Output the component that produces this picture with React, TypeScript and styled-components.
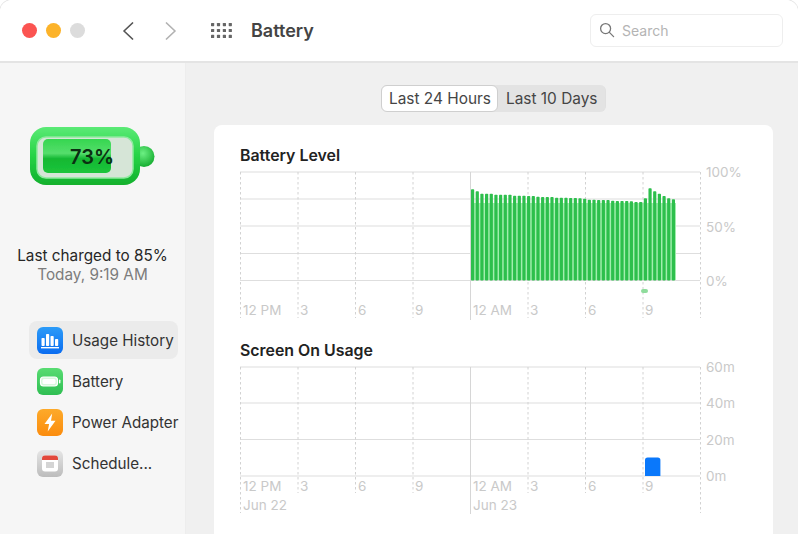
import React from "react";
import styled, { createGlobalStyle } from "styled-components";

const GlobalStyle = createGlobalStyle`
  html, body {
    margin: 0;
    padding: 0;
    width: 798px;
    height: 534px;
    overflow: hidden;
    background: #fff;
    font-family: Inter, "Liberation Sans", sans-serif;
  }
`;

const Window = styled.div`
  width: 798px;
  height: 534px;
  display: flex;
  flex-direction: column;
  overflow: hidden;
  border-radius: 12px 12px 0 0;
  box-shadow: 0 0 0 1px #e6e6e6;
`;

const TitleBar = styled.header`
  height: 61px;
  flex-shrink: 0;
  display: flex;
  align-items: center;
  padding: 0 15px 0 22px;
  background: #fff;
  border-bottom: 2px solid #e4e4e4;
`;

const TrafficLights = styled.div`
  display: flex;
  gap: 9px;
  margin-right: 37px;
`;

const Light = styled.span<{ $color: string }>`
  width: 15px;
  height: 15px;
  border-radius: 50%;
  background: ${(p) => p.$color};
`;

const NavIcons = styled.div`
  display: flex;
  align-items: center;
  gap: 31px;
  margin-right: 18px;
`;

const AppGrid = styled.svg`
  margin-left: 3px;
`;

const WindowTitle = styled.h1`
  margin: 0;
  font-size: 18px;
  font-weight: 600;
  color: #444;
  flex: 1;
`;

const SearchBox = styled.div`
  width: 193px;
  height: 33px;
  box-sizing: border-box;
  display: flex;
  align-items: center;
  gap: 7px;
  padding-left: 8px;
  margin-bottom: 1px;
  border: 1px solid #eeeeee;
  border-radius: 6px;
  font-size: 14px;
  color: #b4b4b4;
`;

const Content = styled.div`
  flex: 1;
  display: flex;
  min-height: 0;
`;

const Sidebar = styled.aside`
  width: 186px;
  flex-shrink: 0;
  display: flex;
  flex-direction: column;
  padding-top: 64px;
  box-sizing: border-box;
  background: #f6f6f6;
  border-right: 1px solid #ededed;
`;

const BatteryWrap = styled.div`
  display: flex;
  justify-content: center;
  margin-bottom: 59px;
`;

const ChargeNote = styled.p`
  margin: 0;
  text-align: center;
  font-size: 15.3px;
  line-height: 19px;
  white-space: nowrap;
  color: #262626;
`;

const ChargeTime = styled(ChargeNote)`
  color: #7c7c7c;
`;

const NavList = styled.nav`
  display: flex;
  flex-direction: column;
  gap: 3px;
  margin: 37px 7px 0 29px;
`;

const NavItem = styled.div<{ $active?: boolean }>`
  height: 38px;
  display: flex;
  align-items: center;
  gap: 9px;
  padding-left: 8px;
  border-radius: 8px;
  font-size: 15.2px;
  white-space: nowrap;
  color: #333;
  background: ${(p) => (p.$active ? "#ebebeb" : "transparent")};
`;

const Main = styled.main`
  flex: 1;
  display: flex;
  flex-direction: column;
  align-items: flex-start;
  padding: 22px 25px 0 28px;
  background: #f0f0f0;
  min-width: 0;
`;

const Segments = styled.div`
  align-self: center;
  display: flex;
  height: 27px;
  margin: 0 0 13px 0;
  border-radius: 6px;
  background: #e3e3e3;
  border-right: 1px solid #e0e0e0;
`;

const Segment = styled.div<{ $active?: boolean }>`
  display: flex;
  align-items: center;
  box-sizing: border-box;
  width: ${(p) => (p.$active ? "117px" : "107px")};
  padding-left: ${(p) => (p.$active ? "7px" : "8px")};
  font-size: 15.4px;
  white-space: nowrap;
  color: #454545;
  border-radius: 6px;
  ${(p) => p.$active && "background: #fff; border: 1px solid #cfcfcf;"}
`;

const Card = styled.section`
  width: 559px;
  flex: 1;
  box-sizing: border-box;
  padding: 21px 0 0 26px;
  background: #fff;
  border-radius: 8px 8px 0 0;
`;

const ChartTitle = styled.h2`
  margin: 0;
  height: 19px;
  line-height: 19px;
  font-size: 15.9px;
  font-weight: 600;
  color: #222;
`;

const ChartSvg = styled.svg`
  display: block;
`;

const BatteryChartSvg = styled(ChartSvg)`
  margin-bottom: 18px;
`;

const AxisLabel = styled.text`
  font-family: Inter, "Liberation Sans", sans-serif;
  font-size: 13.5px;
  fill: #c9c9c9;
`;

const BatteryPercent = styled.text`
  font-family: Inter, "Liberation Sans", sans-serif;
  font-size: 20px;
  font-weight: 600;
  fill: #0b2f12;
`;

const levelTops = [
  189.3, 191.3, 193.7, 193.7, 193.7, 194.7, 194.7, 194.7, 194.7, 195.7, 195.7,
  195.7, 196, 196, 196.7, 197, 197, 197, 197.7, 197.7, 197.7, 198, 198, 198.3,
  198.7, 199.7, 199.7, 200, 200, 200, 200.7, 201, 201, 201, 201.3, 202, 202,
  198.3, 188.3, 191.3, 193.7, 196, 198.3, 199.3,
];

const gridColumns = [0, 57.5, 115, 172.5, 287.5, 345, 402.5, 460];
const hourLabels = [
  { x: 3, text: "12 PM" },
  { x: 60, text: "3" },
  { x: 118, text: "6" },
  { x: 175, text: "9" },
  { x: 233, text: "12 AM" },
  { x: 290, text: "3" },
  { x: 348, text: "6" },
  { x: 405, text: "9" },
];

type GridProps = {
  rows: number[];
  columnEnd: (x: number) => number;
  solidEnd: number;
};

const ChartGrid = ({ rows, columnEnd, solidEnd }: GridProps) => (
  <>
    {rows.map((y) => (
      <line key={y} x1={0} x2={460} y1={y} y2={y} stroke="#dedede" strokeWidth={1.2} />
    ))}
    {gridColumns.map((x) => (
      <line
        key={x}
        x1={x + 0.5}
        x2={x + 0.5}
        y1={7}
        y2={columnEnd(x)}
        stroke="#d2d2d2"
        strokeDasharray="2.5 2.5"
      />
    ))}
    <line x1={230.5} x2={230.5} y1={7} y2={solidEnd} stroke="#d6d6d6" />
  </>
);

const BatteryLevelChart = () => (
  <BatteryChartSvg width={533} height={158}>
    <ChartGrid rows={[7, 34, 61, 88.5, 115.5]} columnEnd={() => 153} solidEnd={155} />
    <rect x={231} y={38} width={205} height={77} fill="#a2eeae" />
    {levelTops.map((top, i) => (
      <rect
        key={i}
        x={231 + i * 4.67}
        y={top - 165}
        width={3.2}
        height={280.5 - top}
        rx={0.8}
        fill="#2dbf4c"
      />
    ))}
    <rect x={401} y={124} width={7} height={4} rx={2} fill="#8fdc9c" />
    <AxisLabel x={466} y={12}>100%</AxisLabel>
    <AxisLabel x={466} y={67}>50%</AxisLabel>
    <AxisLabel x={466} y={121}>0%</AxisLabel>
    {hourLabels.map((l) => (
      <AxisLabel key={l.x} x={l.x} y={150}>{l.text}</AxisLabel>
    ))}
  </BatteryChartSvg>
);

const ScreenUsageChart = () => (
  <ChartSvg width={533} height={158}>
    <ChartGrid
      rows={[7, 43, 79.5, 116]}
      columnEnd={(x) => (x === 0 || x === 460 ? 153 : 133)}
      solidEnd={154}
    />
    <path d="M405 116V100q0-2.6 2.6-2.6h10.2q2.6 0 2.6 2.6V116Z" fill="#0a78fb" />
    <AxisLabel x={466} y={12}>60m</AxisLabel>
    <AxisLabel x={466} y={48}>40m</AxisLabel>
    <AxisLabel x={466} y={85}>20m</AxisLabel>
    <AxisLabel x={466} y={121}>0m</AxisLabel>
    {hourLabels.map((l) => (
      <AxisLabel key={l.x} x={l.x} y={131}>{l.text}</AxisLabel>
    ))}
    <AxisLabel x={3} y={150}>Jun 22</AxisLabel>
    <AxisLabel x={233} y={150}>Jun 23</AxisLabel>
  </ChartSvg>
);

const BatteryGraphic = () => (
  <svg width={127} height={60} viewBox="0 0 127 60">
    <defs>
      <linearGradient id="shell" x1="0" y1="0" x2="0" y2="1">
        <stop offset="0" stopColor="#5bea76" />
        <stop offset="0.5" stopColor="#25d345" />
        <stop offset="1" stopColor="#12b02d" />
      </linearGradient>
      <linearGradient id="charge" x1="0" y1="0" x2="0" y2="1">
        <stop offset="0" stopColor="#35d64f" />
        <stop offset="0.42" stopColor="#55de6c" />
        <stop offset="0.58" stopColor="#12b832" />
        <stop offset="1" stopColor="#1dc53b" />
      </linearGradient>
      <radialGradient id="cap" cx="0.45" cy="0.35" r="0.7">
        <stop offset="0" stopColor="#6cf083" />
        <stop offset="1" stopColor="#0fa82a" />
      </radialGradient>
      <filter id="soft" x="-5%" y="-5%" width="110%" height="110%">
        <feGaussianBlur stdDeviation="0.7" />
      </filter>
    </defs>
    <g filter="url(#soft)">
      <circle cx={115} cy={29.5} r={10.5} fill="url(#cap)" />
      <rect x={1} y={0} width={110} height={58} rx={16} fill="url(#shell)" />
      <rect x={8} y={10} width={96} height={41} rx={9} fill="#d6e5d7" stroke="#8eea9f" strokeWidth={1.5} />
      <rect x={14} y={12} width={68} height={34} rx={5} fill="url(#charge)" />
    </g>
    <BatteryPercent x={41} y={37}>73%</BatteryPercent>
  </svg>
);

const IconTile = ({ id, from, to, children }: { id: string; from: string; to: string; children: React.ReactNode }) => (
  <svg width={26} height={27} viewBox="0 0 26 27" style={{ flexShrink: 0 }}>
    <defs>
      <linearGradient id={id} x1="0" y1="0" x2="0" y2="1">
        <stop offset="0" stopColor={from} />
        <stop offset="1" stopColor={to} />
      </linearGradient>
    </defs>
    <rect width={26} height={27} rx={6} fill={`url(#${id})`} />
    {children}
  </svg>
);

const UsageIcon = () => (
  <IconTile id="usageTile" from="#2b9bf8" to="#0a6cf0">
    <g fill="#fff">
      <rect x={4.5} y={11} width={3.2} height={8} rx={0.8} />
      <rect x={9} y={7} width={3.2} height={12} rx={0.8} />
      <rect x={13.5} y={9} width={3.2} height={10} rx={0.8} />
      <rect x={18} y={12} width={3.2} height={7} rx={0.8} />
      <rect x={4} y={20} width={18} height={1.4} />
    </g>
  </IconTile>
);

const BatteryIcon = () => (
  <IconTile id="batteryTile" from="#58dc72" to="#2fbe52">
    <rect x={3.5} y={9} width={17} height={9} rx={3} fill="#d8f7dd" stroke="#fff" strokeWidth={1.2} />
    <rect x={5.5} y={11} width={13} height={5} rx={1.5} fill="#fff" />
    <rect x={22} y={11.5} width={1.4} height={4} rx={0.7} fill="#fff" />
  </IconTile>
);

const PowerIcon = () => (
  <IconTile id="powerTile" from="#fdaa2a" to="#fb8c0e">
    <path d="M15.2 4.5 7.5 15h4.6l-1.4 7.5 7.8-10.8H14Z" fill="#fff" />
  </IconTile>
);

const ScheduleIcon = () => (
  <IconTile id="scheduleTile" from="#e6e6e6" to="#bcbcbc">
    <rect x={5} y={5.5} width={16} height={16} rx={3} fill="#fff" />
    <path d="M5 10V8.5q0-3 3-3h10q3 0 3 3V10Z" fill="#e2483b" />
    <g fill="#555">
      {[0, 1, 2, 3].map((c) =>
        [0, 1, 2].map((r) => <rect key={`${c}-${r}`} x={9.5 + c * 2} y={12.5 + r * 2} width={1} height={1} />)
      )}
    </g>
  </IconTile>
);

const App = () => (
  <>
    <GlobalStyle />
    <Window>
      <TitleBar>
        <TrafficLights>
          <Light $color="#fb5451" />
          <Light $color="#fcb32a" />
          <Light $color="#dcdcdc" />
        </TrafficLights>
        <NavIcons>
          <svg width={12} height={18} viewBox="0 0 12 18" fill="none" stroke="#555" strokeWidth={1.7} strokeLinecap="round" strokeLinejoin="round">
            <path d="M10.5 1 2 9l8.5 8" />
          </svg>
          <svg width={12} height={18} viewBox="0 0 12 18" fill="none" stroke="#b2b2b2" strokeWidth={1.7} strokeLinecap="round" strokeLinejoin="round">
            <path d="M1.5 1 10 9l-8.5 8" />
          </svg>
          <AppGrid width={22} height={16} viewBox="0 0 22 16" fill="#666">
            {[0, 1, 2, 3].map((c) =>
              [0, 1, 2].map((r) => <rect key={`${c}-${r}`} x={c * 5.9} y={r * 5.9} width={3.2} height={3.2} rx={0.6} />)
            )}
          </AppGrid>
        </NavIcons>
        <WindowTitle>Battery</WindowTitle>
        <SearchBox>
          <svg width={16} height={16} viewBox="0 0 16 16" fill="none" stroke="#777" strokeWidth={1.3} strokeLinecap="round">
            <circle cx={6.6} cy={6.6} r={5} />
            <path d="m10.4 10.4 4.2 4.2" />
          </svg>
          Search
        </SearchBox>
      </TitleBar>
      <Content>
        <Sidebar>
          <BatteryWrap>
            <BatteryGraphic />
          </BatteryWrap>
          <ChargeNote>Last charged to 85%</ChargeNote>
          <ChargeTime>Today, 9:19 AM</ChargeTime>
          <NavList>
            <NavItem $active><UsageIcon />Usage History</NavItem>
            <NavItem><BatteryIcon />Battery</NavItem>
            <NavItem><PowerIcon />Power Adapter</NavItem>
            <NavItem><ScheduleIcon />Schedule...</NavItem>
          </NavList>
        </Sidebar>
        <Main>
          <Segments>
            <Segment $active>Last 24 Hours</Segment>
            <Segment>Last 10 Days</Segment>
          </Segments>
          <Card>
            <ChartTitle>Battery Level</ChartTitle>
            <BatteryLevelChart />
            <ChartTitle>Screen On Usage</ChartTitle>
            <ScreenUsageChart />
          </Card>
        </Main>
      </Content>
    </Window>
  </>
);

export default App;
